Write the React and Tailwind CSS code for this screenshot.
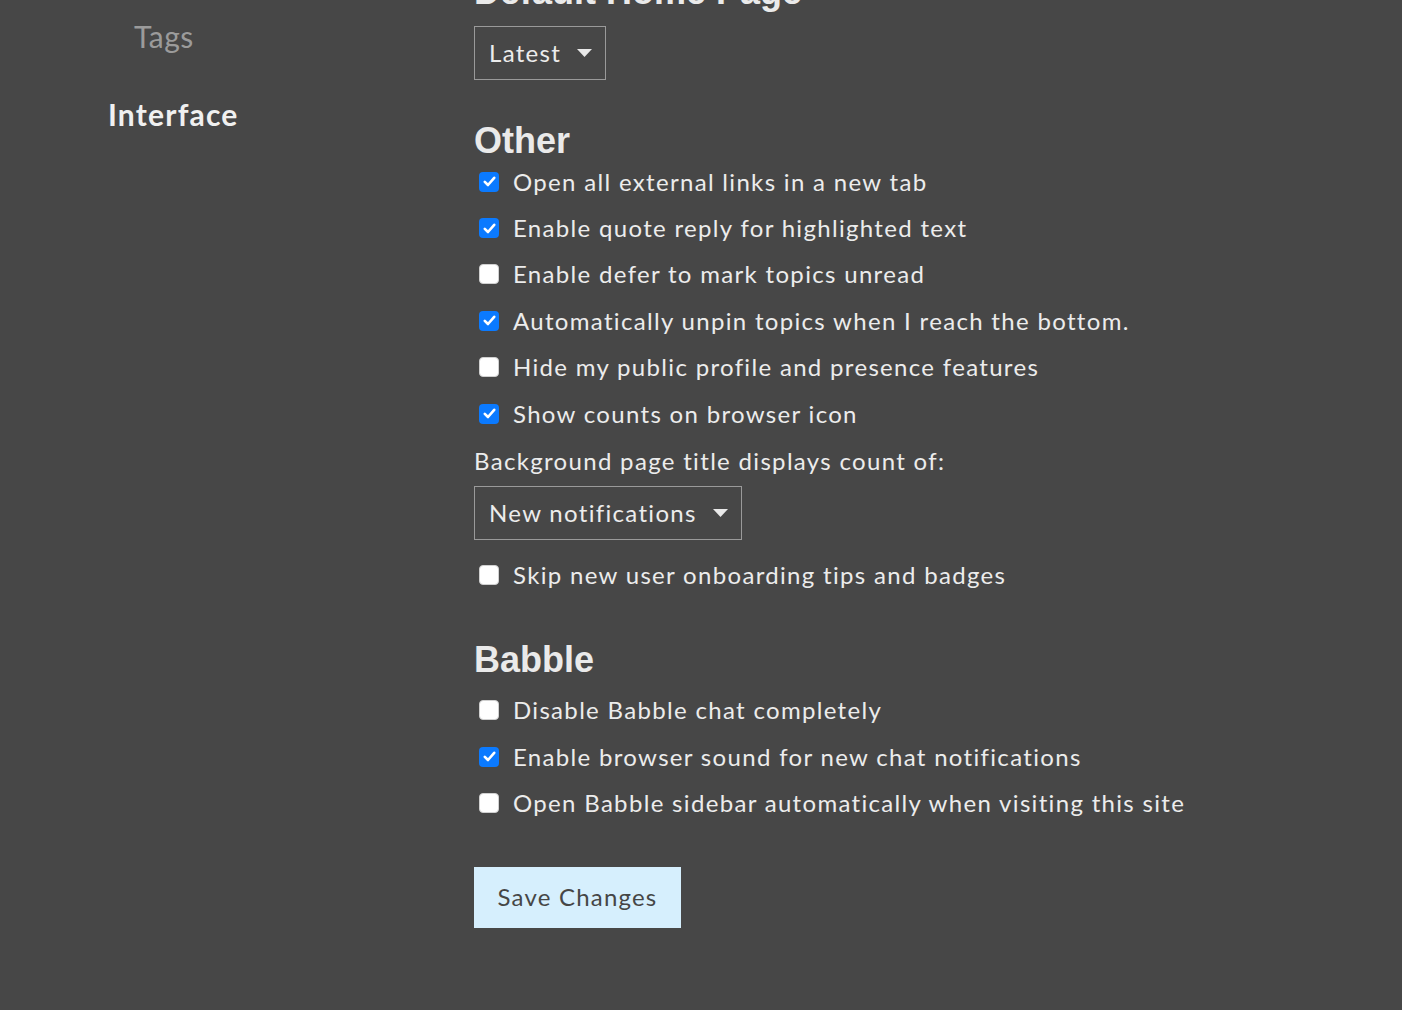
import React from 'react'

const otherPrefs = [
  { label: 'Open all external links in a new tab', checked: true },
  { label: 'Enable quote reply for highlighted text', checked: true },
  { label: 'Enable defer to mark topics unread', checked: false },
  { label: 'Automatically unpin topics when I reach the bottom.', checked: true },
  { label: 'Hide my public profile and presence features', checked: false },
  { label: 'Show counts on browser icon', checked: true },
]

const babblePrefs = [
  { label: 'Disable Babble chat completely', checked: false },
  { label: 'Enable browser sound for new chat notifications', checked: true },
  { label: 'Open Babble sidebar automatically when visiting this site', checked: false },
]

function Box({ checked }) {
  if (checked) {
    return (
      <span className="ml-[5px] mr-[14px] flex h-[20px] w-[20px] shrink-0 items-center justify-center rounded-[4px] bg-[#0b7aff]">
        <svg width="13" height="11" viewBox="0 0 13 11" fill="none">
          <path d="M1.8 5.8 L5 9 L11.2 1.8" stroke="#fff" strokeWidth="2.6" strokeLinecap="round" strokeLinejoin="round" />
        </svg>
      </span>
    )
  }
  return <span className="ml-[5px] mr-[14px] h-[20px] w-[20px] shrink-0 rounded-[4px] border border-[#d0d0d0] bg-white" />
}

function Row({ label, checked }) {
  return (
    <label className="flex h-[46.4px] items-center">
      <Box checked={checked} />
      <span>{label}</span>
    </label>
  )
}

function Select({ value, className }) {
  return (
    <div className={`flex h-[54px] items-center border border-[#9a9a9a] pl-[14px] pr-[13px] ${className}`}>
      <span className="leading-[34px]">{value}</span>
      <svg className="ml-[16px]" width="15" height="8" viewBox="0 0 15 8">
        <path d="M0 0 H15 L7.5 8 Z" fill="#e9e9e9" />
      </svg>
    </div>
  )
}

const heading = "font-['Liberation_Sans',Arial,sans-serif] text-[36px] font-bold leading-[36px] tracking-normal text-[#eaeaea]"

export default function App() {
  return (
    <div className="flex h-[1010px] overflow-hidden bg-[#474747] font-['Lato','Noto_Sans',sans-serif] text-[24px] tracking-[0.055em] text-[#ececec]">
      <nav className="w-[474px] shrink-0">
        <ul className="mt-[16px]">
          <li className="pl-[134px] text-[30px] leading-[40px] tracking-[0.5px] text-[#9b9b9b]">Tags</li>
          <li className="mt-[38px] pl-[108px] text-[30px] font-bold leading-[40px] tracking-[0.04em] text-[#f0f0f0]">Interface</li>
        </ul>
      </nav>

      <main className="mt-[-26.5px] flex flex-col items-start">
        <h3 className={heading}>Default Home Page</h3>
        <Select value="Latest" className="mt-[16.5px]" />

        <h3 className={`${heading} mt-[42.5px]`}>Other</h3>
        <div className="flex flex-col">
          {otherPrefs.map(p => <Row key={p.label} {...p} />)}
        </div>
        <div className="mt-[7px] leading-[34px]">Background page title displays count of:</div>
        <Select value="New notifications" className="mt-[8px]" />
        <div className="mt-[12px]">
          <Row label="Skip new user onboarding tips and badges" checked={false} />
        </div>

        <h3 className={`${heading} mt-[44px]`}>Babble</h3>
        <div className="mt-[9px] flex flex-col">
          {babblePrefs.map(p => <Row key={p.label} {...p} />)}
        </div>

        <button className="mt-[40.5px] h-[61px] w-[207px] bg-[#d6effd] text-[24px] tracking-[0.05em] text-[#464646]">Save Changes</button>
      </main>
    </div>
  )
}
